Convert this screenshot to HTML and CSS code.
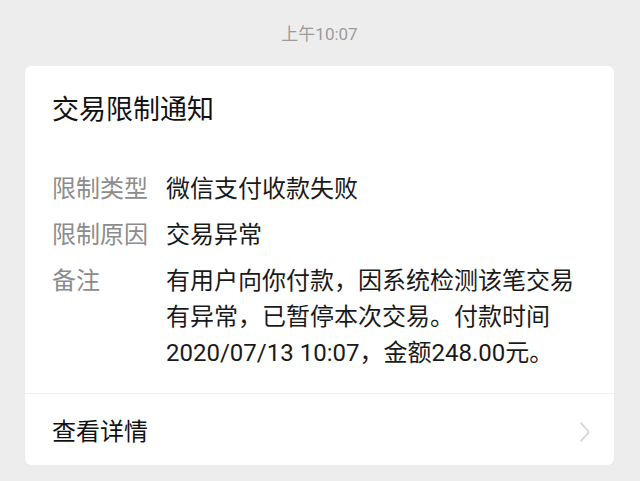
FILE: index.html
```html
<!DOCTYPE html>
<html lang="zh-CN">
<head>
<meta charset="utf-8">
<link rel="stylesheet" href="styles.css">
</head>
<body>
<div class="page">
  <div class="time">上午10:07</div>
  <div class="card">
    <div class="card-body">
      <div class="title">交易限制通知</div>
      <div class="rows">
        <div class="row"><div class="label">限制类型</div><div class="value">微信支付收款失败</div></div>
        <div class="row"><div class="label">限制原因</div><div class="value">交易异常</div></div>
        <div class="row"><div class="label">备注</div><div class="value">有用户向你付款，因系统检测该笔交易有异常，已暂停本次交易。付款时间2020/07/13 10:07，金额248.00元。</div></div>
      </div>
    </div>
    <div class="footer">
      <span class="link">查看详情</span>
      <svg class="chev" width="14" height="24" viewBox="0 0 14 24"><polyline points="3,3 11,12 3,21" fill="none" stroke="#d2d2d2" stroke-width="1.6" stroke-linejoin="round" stroke-linecap="round"/></svg>
    </div>
  </div>
</div>
</body>
</html>
```
FILE: styles.css
```css
html, body {
  margin: 0;
  padding: 0;
  background: #ededed;
}
body {
  font-family: Roboto, "Noto Sans CJK SC", sans-serif;
}
.page {
  padding: 22px 26px 0 25px;
}
.time {
  text-align: center;
  font-size: 17px;
  line-height: 24px;
  color: #9b9b9b;
  margin-bottom: 20px;
}
.card {
  background: #fff;
  border-radius: 6px;
  box-shadow: 0 1px 2px rgba(0,0,0,0.04);
}
.card-body {
  padding: 26px 26px 22px 27px;
}
.title {
  font-size: 27px;
  line-height: 36px;
  color: #111;
  margin-bottom: 43px;
}
.rows {
  display: flex;
  flex-direction: column;
  gap: 10px;
}
.row {
  display: flex;
  font-size: 24px;
  line-height: 36px;
}
.label {
  width: 114px;
  flex: none;
  color: #8c8c8c;
}
.value {
  flex: 1;
  color: #1a1a1a;
}
.footer {
  border-top: 1px solid #f0f0f0;
  display: flex;
  align-items: center;
  justify-content: space-between;
  padding: 20px 22px 15px 27px;
}
.link {
  font-size: 24px;
  line-height: 36px;
  color: #111;
}
.chev {
  display: block;
}
```
